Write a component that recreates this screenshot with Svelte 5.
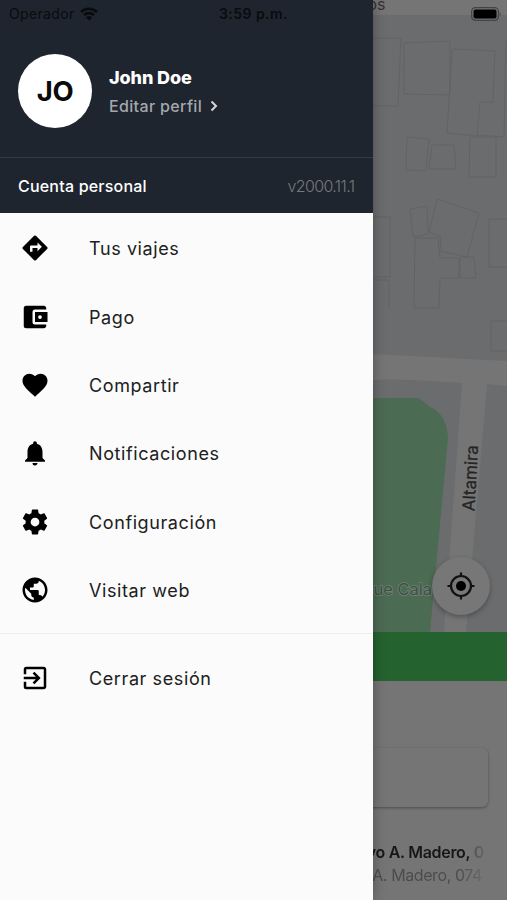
<script>
  const items = [
    { label: 'Tus viajes', icon: 'M21.71 11.29l-9-9a.996.996 0 0 0-1.41 0l-9 9a.996.996 0 0 0 0 1.41l9 9c.39.39 1.02.39 1.41 0l9-9a.996.996 0 0 0 0-1.41zM14 14.5V12h-4v3H8v-4c0-.55.45-1 1-1h5V7.500l3.500 3.500-3.500 3.500z' },
    { label: 'Pago', icon: 'M21 18v1c0 1.100-.9 2-2 2H5a2 2 0 0 1-2-2V5a2 2 0 0 1 2-2h14c1.100 0 2 .9 2 2v1h-9a2 2 0 0 0-2 2v8a2 2 0 0 0 2 2h9zm-9-2h10V8H12v8zm4-2.500a1.500 1.500 0 1 1 0-3 1.500 1.500 0 0 1 0 3z' },
    { label: 'Compartir', icon: 'M12 21.350l-1.450-1.320C5.400 15.360 2 12.280 2 8.500 2 5.420 4.420 3 7.500 3c1.740 0 3.410.81 4.500 2.090C13.090 3.810 14.760 3 16.500 3 19.580 3 22 5.420 22 8.500c0 3.780-3.400 6.860-8.550 11.540L12 21.350z' },
    { label: 'Notificaciones', icon: 'M12 22c1.100 0 2-.9 2-2h-4a2 2 0 0 0 2 2zm6-6v-5c0-3.070-1.640-5.640-4.500-6.320V4a1.500 1.500 0 0 0-3 0v.68C7.630 5.360 6 7.920 6 11v5l-2 2v1h16v-1l-2-2z' },
    { label: 'Configuración', icon: 'M19.430 12.980c.04-.32.07-.64.07-.98s-.03-.66-.07-.98l2.110-1.650c.19-.15.24-.42.12-.64l-2-3.460c-.12-.22-.39-.3-.61-.22l-2.490 1c-.52-.4-1.080-.73-1.690-.98l-.38-2.650A.488.488 0 0 0 14 2h-4c-.25 0-.46.18-.49.42l-.38 2.650c-.61.25-1.170.59-1.690.98l-2.490-1c-.23-.09-.49 0-.61.22l-2 3.460c-.13.22-.07.49.12.64l2.110 1.650c-.04.32-.07.65-.07.98s.03.66.07.98l-2.110 1.650c-.19.15-.24.42-.12.64l2 3.460c.12.22.39.3.61.22l2.490-1c.52.4 1.080.73 1.690.98l.38 2.650c.03.24.24.42.49.42h4c.25 0 .46-.18.49-.42l.38-2.650c.61-.25 1.170-.59 1.690-.98l2.490 1c.23.09.49 0 .61-.22l2-3.460c.12-.22.07-.49-.12-.64l-2.110-1.650zM12 15.500a3.500 3.500 0 1 1 0-7 3.500 3.500 0 0 1 0 7z' },
    { label: 'Visitar web', icon: 'M12 2C6.480 2 2 6.480 2 12s4.480 10 10 10 10-4.480 10-10S17.520 2 12 2zm-1 17.930c-3.950-.49-7-3.850-7-7.930 0-.62.08-1.210.21-1.790L9 15v1c0 1.100.9 2 2 2v1.930zm6.900-2.540A1.990 1.990 0 0 0 16 16h-1v-3c0-.55-.45-1-1-1H8v-2h2c.55 0 1-.45 1-1V7h2c1.100 0 2-.9 2-2v-.41c2.930 1.190 5 4.060 5 7.410 0 2.080-.8 3.970-2.100 5.390z' },
  ];

  // building footprints on the map
  const buildings = [
    'M-2 38H28L25 106H-2', 'M31 43L77 41V95L31 94Z',
    'M79 50Q80 49 82 49L122 51L120 102H107L104 136L74 133Z',
    'M34 137L56 139L53 171L33 170Z', 'M59 145H81L83 169H56Z', 'M97 137H123V177H96Z',
    'M37 209L54 206L55 234L40 237Z', 'M64 199L106 213L94 257L67 251L68 237L56 232Z',
    'M42 238H65L67 258H86V278H67L66 308H41Z', 'M87 257H101L103 278H87Z',
    'M136 219H116V267H136', 'M-2 217H17V277H-2', 'M0 280H16V307', 'M136 321H118V351H136',
    'M133 40L131 137L105 135',
  ];
</script>

<div class="screen">
  <aside class="drawer">
    <header>
      <div class="profile">
        <div class="avatar">JO</div>
        <div class="who">
          <strong>John Doe</strong>
          <a href="#perfil">Editar perfil
            <svg width="8" height="12" viewBox="0 0 8 12"><path d="M1.500 1.500L6 6l-4.500 4.500" /></svg>
          </a>
        </div>
      </div>
      <div class="account">
        <span>Cuenta personal</span>
        <span class="version">v2000.11.1</span>
      </div>
    </header>

    <nav>
      {#each items as { label, icon }}
        <button class="row">
          <svg width="30" height="30" viewBox="0 0 24 24"><path fill-rule="evenodd" d={icon} /></svg>
          <span>{label}</span>
        </button>
      {/each}
    </nav>
    <button class="row logout">
      <svg width="30" height="30" viewBox="0 0 24 24">
        <path d="M10.090 15.590L11.500 17l5-5-5-5-1.410 1.410L12.670 11H3v2h9.670l-2.580 2.590zM19 3H5a2 2 0 0 0-2 2v4h2V5h14v14H5v-4H3v4a2 2 0 0 0 2 2h14c1.100 0 2-.9 2-2V5c0-1.100-.9-2-2-2z" />
      </svg>
      <span>Cerrar sesión</span>
    </button>
  </aside>

  <main>
    <div class="topbar">os</div>
    <div class="map">
      <svg width="134" height="617" viewBox="0 15 134 617">
        <g class="buildings">
          {#each buildings as d}
            <path {d} />
          {/each}
        </g>
        <path class="road" d="M0 354L134 361V386L114 384L93 632H71L89 383L40 380Q15 379 0 380Z" />
        <path class="park" d="M0 398H45Q48 399 57 407C69 411 75 426 75 438L57 632H0Z" />
        <text class="park-name" x="59" y="595" text-anchor="end">que Cala</text>
        <text class="street" transform="translate(101.500 511.500) rotate(-87)">Altamira</text>
      </svg>
      <button class="locate" aria-label="Mi ubicación">
        <svg width="28" height="28" viewBox="0 0 28 28">
          <circle class="ring" cx="14" cy="14" r="10" />
          <circle cx="14" cy="14" r="5" />
          <path class="ring" d="M14 .5V4M14 24v3.500M.5 14H4M24 14h3.500" />
        </svg>
      </button>
    </div>
    <div class="banner"></div>
    <section>
      <div class="search"></div>
      <p class="place">Gustavo A. Madero, 0</p>
      <p class="address">Gustavo A. Madero, 074</p>
    </section>
  </main>

  <div class="status">
    <span class="carrier">Operador
      <svg width="18" height="14" viewBox="0 0 18 14">
        <path d="M1 5a11.400 11.400 0 0 1 16 0M4 8.100a7.200 7.200 0 0 1 10 0" />
        <path class="fan" d="M9 13.500L5.900 10.400a4.500 4.500 0 0 1 6.200 0Z" />
      </svg>
    </span>
    <time>3:59 p.m.</time>
    <svg class="battery" width="31" height="14" viewBox="0 0 31 14">
      <rect class="case" x=".6" y=".6" width="26.800" height="12.800" rx="4" />
      <rect x="2.500" y="2.500" width="23" height="9" rx="2" />
      <path class="tip" d="M28.700 4.700q2 2.300 0 4.600z" />
    </svg>
  </div>
</div>

<style>
:global(body) {
  margin: 0;
  overflow: hidden;
}

.screen {
  position: relative;
  display: grid;
  grid-template-columns: 372.5px 1fr;
  width: 507px;
  height: 900px;
  overflow: hidden;
  font-family: Inter, sans-serif;
  background: #757575;
}

button {
  border: none;
  background: none;
  font: inherit;
  padding: 0;
}

.drawer {
  z-index: 1;
  background: #fbfbfb;
  box-shadow: 0 0 12px rgba(0, 0, 0, 0.3);
}

header {
  height: 213px;
  background: #1e252e;
  color: #fff;
}

.profile {
  display: flex;
  align-items: center;
  gap: 17px;
  height: 158px;
  padding: 25px 18px 0;
  box-sizing: border-box;
  border-bottom: 1px solid #333b43;
}

.avatar {
  display: grid;
  place-items: center;
  width: 74px;
  height: 74px;
  border-radius: 50%;
  background: #fff;
  color: #0b0b0b;
  font-size: 27.5px;
  font-weight: 700;
  letter-spacing: -0.4px;
}

.who {
  display: flex;
  flex-direction: column;
  gap: 6px;
  padding-top: 2px;
  line-height: 22px;
}

.who strong {
  font-size: 18px;
  font-weight: 800;
  letter-spacing: -0.1px;
}

.who a {
  color: #a4a8ac;
  font-size: 16px;
  font-weight: 500;
  letter-spacing: 0.35px;
  text-decoration: none;
}

.who svg {
  margin-left: 3px;
  fill: none;
  stroke: #d4d7da;
  stroke-width: 2;
}

.account {
  display: flex;
  align-items: center;
  justify-content: space-between;
  height: 55px;
  padding: 0 18px;
  font-size: 16px;
  font-weight: 500;
  letter-spacing: 0.2px;
}

.version {
  color: #74797e;
  font-weight: 300;
  letter-spacing: -0.6px;
}

nav {
  padding: 1px 0 9px;
  border-bottom: 1px solid #eee;
}

.row {
  display: flex;
  align-items: center;
  gap: 39px;
  width: 100%;
  height: 68.4px;
  padding-left: 20px;
  color: #202020;
  font-size: 18px;
  letter-spacing: 0.6px;
}

.row svg {
  fill: #000;
}

.row span {
  padding-top: 1px;
}

.logout {
  margin-top: 9px;
}

main {
  display: flex;
  flex-direction: column;
  min-width: 0;
}

.topbar {
  height: 15px;
  color: #333;
  font-size: 16px;
  line-height: 8px;
  text-indent: -5px;
  background: #757575;
}

.map {
  position: relative;
  height: 617px;
  background: #6b6c6e;
}

.map > svg {
  display: block;
}

.buildings {
  fill: none;
  stroke: #626365;
}

.road {
  fill: #757575;
}

.park {
  fill: #4c6b53;
}

text {
  fill: #242424;
  font-size: 17px;
}

.street {
  stroke: #242424;
  stroke-width: 0.3;
}

.park-name {
  fill: #3e5144;
  stroke: #718176;
  stroke-width: 1.6;
  paint-order: stroke;
  font-size: 16.5px;
}

.locate {
  position: absolute;
  left: 59px;
  top: 542px;
  display: grid;
  place-items: center;
  width: 58px;
  height: 58px;
  border-radius: 50%;
  background: #777;
  box-shadow: 0 2px 5px rgba(0, 0, 0, 0.3);
}

.ring {
  fill: none;
  stroke: #111;
  stroke-width: 2.2;
}

.banner {
  height: 49px;
  background: #24622f;
}

section {
  display: flex;
  flex-direction: column;
  align-items: flex-end;
  padding: 67px 19px 0 0;
}

.search {
  width: 150px;
  height: 59px;
  margin-bottom: 34px;
  border-radius: 6px;
  box-shadow: 0 1px 3px rgba(0, 0, 0, 0.35);
}

p {
  margin: 0 4px 0 0;
  line-height: 23px;
  white-space: nowrap;
}

.place {
  color: transparent;
  background: linear-gradient(90deg, #171717 92%, #555 94%, #666 100%);
  background-clip: text;
  font-size: 16px;
  font-weight: 600;
  letter-spacing: -0.3px;
}

.address {
  margin-right: 6px;
  color: transparent;
  background: linear-gradient(90deg, #4b4b4b 86%, #686868 100%);
  background-clip: text;
  font-size: 16px;
  letter-spacing: -0.4px;
}

.status {
  position: absolute;
  inset: 0 0 auto;
  z-index: 2;
  display: grid;
  grid-template-columns: 1fr auto 1fr;
  align-items: center;
  height: 27px;
  padding: 0 7px 0 9px;
  color: #090b0e;
  font-size: 14px;
}

.carrier {
  display: flex;
  align-items: center;
  gap: 5px;
  letter-spacing: 0.35px;
}

.carrier svg {
  fill: none;
  stroke: #090b0e;
  stroke-width: 2.6;
}

.carrier .fan {
  fill: #090b0e;
  stroke: none;
}

time {
  margin-right: 2px;
  font-weight: 600;
  letter-spacing: 0.45px;
}

.battery {
  position: relative;
  left: 2px;
  justify-self: end;
}

.case {
  fill: none;
  stroke: #444;
  stroke-width: 1.2;
}

.tip {
  fill: #444;
}
</style>
